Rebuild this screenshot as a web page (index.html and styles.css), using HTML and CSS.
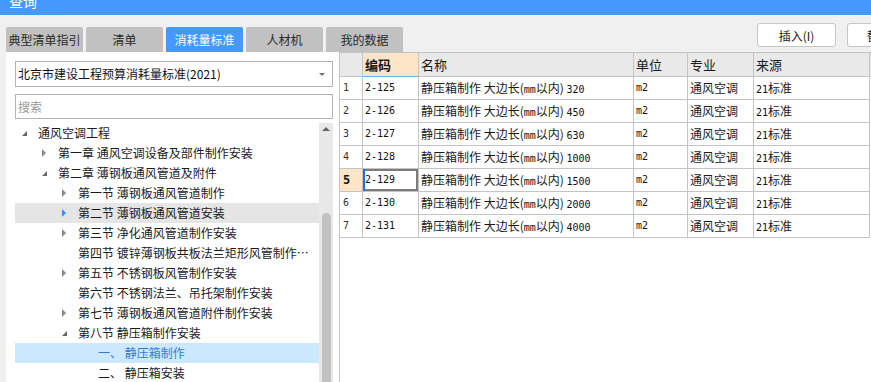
FILE: index.html
```html
<!DOCTYPE html>
<html lang="zh-CN">
<head>
    <meta charset="UTF-8">
    <title>查询</title>
    <link rel="stylesheet" href="styles.css">
</head>
<body>
    <div class="titlebar"><span class="title">查询</span></div>

    <div class="toolbar">
        <ul class="tabs">
            <li class="tab">典型清单指引</li>
            <li class="tab">清单</li>
            <li class="tab active">消耗量标准</li>
            <li class="tab">人材机</li>
            <li class="tab">我的数据</li>
        </ul>
        <div class="actions">
            <button class="btn">插入(I)</button>
            <button class="btn">替换(R)</button>
        </div>
    </div>

    <div class="main">
        <div class="sidebar">
            <div class="select">北京市建设工程预算消耗量标准(2021)<span class="caret"></span></div>
            <input class="search" type="text" placeholder="搜索">
            <div class="tree-wrap">
                <ul class="tree">
                    <li class="node lv0 open"><span class="arrow"></span>通风空调工程</li>
                    <li class="node lv1 closed"><span class="arrow"></span>第一章 通风空调设备及部件制作安装</li>
                    <li class="node lv1 open"><span class="arrow"></span>第二章 薄钢板通风管道及附件</li>
                    <li class="node lv2 closed"><span class="arrow"></span>第一节 薄钢板通风管道制作</li>
                    <li class="node lv2 closed hover"><span class="arrow"></span>第二节 薄钢板通风管道安装</li>
                    <li class="node lv2 closed"><span class="arrow"></span>第三节 净化通风管道制作安装</li>
                    <li class="node lv2"><span class="arrow"></span>第四节 镀锌薄钢板共板法兰矩形风管制作安装</li>
                    <li class="node lv2 closed"><span class="arrow"></span>第五节 不锈钢板风管制作安装</li>
                    <li class="node lv2"><span class="arrow"></span>第六节 不锈钢法兰、吊托架制作安装</li>
                    <li class="node lv2 closed"><span class="arrow"></span>第七节 薄钢板通风管道附件制作安装</li>
                    <li class="node lv2 open"><span class="arrow"></span>第八节 静压箱制作安装</li>
                    <li class="node lv3 selected"><span class="arrow"></span>一、 静压箱制作</li>
                    <li class="node lv3"><span class="arrow"></span>二、 静压箱安装</li>
                </ul>
                <div class="scrollbar">
                    <span class="up"></span>
                    <span class="thumb"></span>
                </div>
            </div>
        </div>

        <div class="grid">
            <div class="row head">
                <div class="cell idx"></div>
                <div class="cell code current">编码</div>
                <div class="cell">名称</div>
                <div class="cell">单位</div>
                <div class="cell">专业</div>
                <div class="cell">来源</div>
            </div>
            <div class="row">
                <div class="cell idx">1</div>
                <div class="cell n">2-125</div>
                <div class="cell">静压箱制作 大边长(<span class="n">mm</span>以内) <span class="n">320</span></div>
                <div class="cell n">m2</div>
                <div class="cell">通风空调</div>
                <div class="cell"><span class="n">21</span>标准</div>
            </div>
            <div class="row">
                <div class="cell idx">2</div>
                <div class="cell n">2-126</div>
                <div class="cell">静压箱制作 大边长(<span class="n">mm</span>以内) <span class="n">450</span></div>
                <div class="cell n">m2</div>
                <div class="cell">通风空调</div>
                <div class="cell"><span class="n">21</span>标准</div>
            </div>
            <div class="row">
                <div class="cell idx">3</div>
                <div class="cell n">2-127</div>
                <div class="cell">静压箱制作 大边长(<span class="n">mm</span>以内) <span class="n">630</span></div>
                <div class="cell n">m2</div>
                <div class="cell">通风空调</div>
                <div class="cell"><span class="n">21</span>标准</div>
            </div>
            <div class="row">
                <div class="cell idx">4</div>
                <div class="cell n">2-128</div>
                <div class="cell">静压箱制作 大边长(<span class="n">mm</span>以内) <span class="n">1000</span></div>
                <div class="cell n">m2</div>
                <div class="cell">通风空调</div>
                <div class="cell"><span class="n">21</span>标准</div>
            </div>
            <div class="row active">
                <div class="cell idx">5</div>
                <div class="cell n focus">2-129</div>
                <div class="cell">静压箱制作 大边长(<span class="n">mm</span>以内) <span class="n">1500</span></div>
                <div class="cell n">m2</div>
                <div class="cell">通风空调</div>
                <div class="cell"><span class="n">21</span>标准</div>
            </div>
            <div class="row">
                <div class="cell idx">6</div>
                <div class="cell n">2-130</div>
                <div class="cell">静压箱制作 大边长(<span class="n">mm</span>以内) <span class="n">2000</span></div>
                <div class="cell n">m2</div>
                <div class="cell">通风空调</div>
                <div class="cell"><span class="n">21</span>标准</div>
            </div>
            <div class="row">
                <div class="cell idx">7</div>
                <div class="cell n">2-131</div>
                <div class="cell">静压箱制作 大边长(<span class="n">mm</span>以内) <span class="n">4000</span></div>
                <div class="cell n">m2</div>
                <div class="cell">通风空调</div>
                <div class="cell"><span class="n">21</span>标准</div>
            </div>
        </div>
    </div>
</body>
</html>
```

FILE: styles.css
```css
body {
    margin: 0;
    width: 871px;
    height: 382px;
    overflow: hidden;
    background-color: #f0f0f0;
    font-family: 'Noto Sans CJK SC', 'Noto Sans', sans-serif;
    font-size: 12px;
    color: #1a1a1a;
}
.titlebar {
    height: 15px;
    background: #4499ff;
    overflow: hidden;
}
.title {
    display: block;
    margin-top: -9px;
    padding-left: 9px;
    font-size: 14px;
    line-height: 20px;
    color: #ffffff;
}
.toolbar {
    display: flex;
    align-items: flex-end;
    height: 37px;
    padding-left: 6px;
}
.tabs {
    list-style: none;
    margin: 0;
    padding: 0;
    display: flex;
    gap: 3px;
}
.tab {
    width: 77px;
    height: 25px;
    line-height: 25px;
    text-align: center;
    background: #c1c1c1;
    color: #2a2a2a;
    border-radius: 2px 2px 0 0;
    white-space: nowrap;
    overflow: hidden;
}
.tab.active {
    background: #4499ff;
    color: #ffffff;
}
.actions {
    display: flex;
    gap: 11px;
    margin-left: auto;
    margin-right: -55px;
    align-self: flex-start;
    margin-top: 8px;
}
.btn {
    width: 79px;
    height: 24px;
    padding: 0;
    background: #ffffff;
    border: 1px solid #c6c6c6;
    border-radius: 3px;
    font-family: inherit;
    font-size: 12px;
    color: #222;
}
.main {
    display: flex;
    height: 330px;
}
.sidebar {
    width: 318px;
    margin-left: 6px;
    padding: 9px 6px 0 9px;
    background: #ffffff;
    display: flex;
    flex-direction: column;
}
.select {
    position: relative;
    height: 24px;
    line-height: 24px;
    border: 1px solid #b4b4b4;
    padding-left: 2px;
    font-size: 12px;
    color: #111;
}
.caret {
    position: absolute;
    right: 7px;
    top: 11px;
    border-left: 3px solid transparent;
    border-right: 3px solid transparent;
    border-top: 3px solid #707070;
}
.search {
    margin-top: 7px;
    height: 25px;
    box-sizing: border-box;
    border: 1px solid #b4b4b4;
    padding: 0 2px;
    font-family: inherit;
    font-size: 12px;
    outline: none;
}
.search::placeholder {
    color: #9a9a9a;
}
.tree-wrap {
    display: flex;
    margin-top: 4px;
    flex: 1;
    overflow: hidden;
}
.tree {
    list-style: none;
    margin: 0;
    padding: 0;
    flex: 1;
    min-width: 0;
}
.node {
    display: block;
    height: 20px;
    line-height: 20px;
    padding-right: 4px;
    white-space: nowrap;
    overflow: hidden;
    text-overflow: ellipsis;
}
.node.lv0 { padding-left: 7px; }
.node.lv1 { padding-left: 27px; }
.node.lv2 { padding-left: 47px; }
.node.lv3 { padding-left: 67px; }
.arrow {
    display: inline-block;
    position: relative;
    width: 16px;
    height: 20px;
    vertical-align: top;
}
.closed .arrow::before {
    content: "";
    position: absolute;
    left: 0;
    top: 6px;
    border-left: 4px solid #8a8a8a;
    border-top: 4px solid transparent;
    border-bottom: 4px solid transparent;
}
.open .arrow::before {
    content: "";
    position: absolute;
    left: 0;
    top: 8px;
    border-bottom: 5px solid #6a6a6a;
    border-left: 5px solid transparent;
}
.node.hover {
    background: #e5e5e5;
}
.node.hover .arrow::before {
    border-left-color: #3b8ff0;
}
.node.selected {
    background: #cce8ff;
    color: #3a78d6;
}
.scrollbar {
    width: 14px;
    background: #e8e8e8;
    display: flex;
    flex-direction: column;
    align-items: center;
}
.up {
    margin-top: 4px;
    border-left: 4px solid transparent;
    border-right: 4px solid transparent;
    border-bottom: 4px solid #666666;
}
.thumb {
    margin-top: 82px;
    width: 9px;
    flex: 1;
    background: #c2c2c2;
    border-radius: 5px 5px 0 0;
}
.grid {
    flex: 1;
    background: #ffffff;
    border-left: 1px solid #c4c4c4;
}
.row {
    display: grid;
    grid-template-columns: 23px 56px 215px 54px 66px 116px;
    height: 23px;
}
.row.head {
    height: 24px;
    border-top: 1px solid #c4c4c4;
    background: #e9e9e9;
    font-size: 13px;
}
.cell {
    box-sizing: border-box;
    border-right: 1px solid #c4c4c4;
    border-bottom: 1px solid #c4c4c4;
    padding-left: 2px;
    line-height: 22px;
    white-space: nowrap;
    overflow: hidden;
}
.head .cell {
    line-height: 23px;
}
.head .code {
    background: #fee5c8;
    font-weight: bold;
    border-bottom-color: #6aa8f0;
}
.n {
    font-family: 'DejaVu Sans Mono', monospace;
    font-size: 10px;
    color: #111;
}
.idx {
    font-family: 'DejaVu Sans Mono', monospace;
    font-size: 10px;
    color: #333;
    padding-left: 3px;
    background: #ffffff;
}
.head .idx {
    background: #e9e9e9;
}
.row.active .idx {
    background: #fee5c8;
    font-weight: bold;
    font-size: 12px;
    color: #111;
}
.focus {
    box-shadow: inset 2px 0 0 #1a6ff0, inset 0 2px 0 #7c7c7c, inset -2px 0 0 #7c7c7c, inset 0 -2px 0 #7c7c7c;
}
```
